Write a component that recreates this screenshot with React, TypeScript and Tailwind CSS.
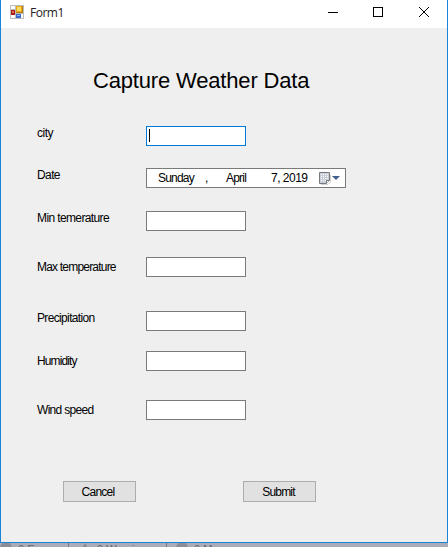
import { useState } from "react";

interface IField {
  name: string;
  label: string;
  rowClass: string;
  labelClass: string;
}

const fields: IField[] = [
  { name: "min", label: "Min temerature", rowClass: "mt-[23px]", labelClass: "tracking-[-0.62px]" },
  { name: "max", label: "Max temperature", rowClass: "mt-[26px]", labelClass: "pt-[3px] tracking-[-0.8px]" },
  { name: "precipitation", label: "Precipitation", rowClass: "mt-[34px]", labelClass: "tracking-[-0.65px]" },
  { name: "humidity", label: "Humidity", rowClass: "mt-5", labelClass: "pt-[3px] tracking-[-0.9px]" },
  { name: "wind", label: "Wind speed", rowClass: "mt-[29px]", labelClass: "pt-[3px] tracking-[-0.7px]" },
];

function FormIcon() {
  return (
    <svg width="14" height="14" viewBox="0 0 14 14" shapeRendering="crispEdges">
      <rect width="14" height="14" fill="#bdbdbd" />
      <rect x="1" y="1" width="4" height="3" fill="#fff" />
      <rect x="1" y="10" width="4" height="3" fill="#fff" />
      <rect x="11" y="9" width="2" height="4" fill="#fff" />
      <rect x="1" y="5" width="4" height="5" fill="#a81e16" />
      <rect x="2" y="6" width="2" height="2" fill="#df6a5c" />
      <rect x="6" y="1" width="7" height="7" fill="#b27d0c" />
      <rect x="6" y="1" width="6" height="6" fill="#e5aa16" />
      <rect x="7" y="2" width="4" height="4" fill="#ffdc60" />
      <rect x="6" y="9" width="5" height="4" fill="#3868cc" />
      <rect x="7" y="10" width="3" height="1" fill="#8fb7f5" />
    </svg>
  );
}

function CalendarIcon() {
  return (
    <svg width="21" height="14" viewBox="0 0 21 14">
      <path d="M2 12.5h7l2.5-2.5V3" fill="none" stroke="#d5d0cc" />
      <path d="M.5.5h10v8l-3 3h-7z" fill="#c9d0da" stroke="#77797d" />
      <path
        d="M2 2.5h8M2 4.5h8M2 6.5h8M2 8.5h5"
        stroke="#f6f8fa"
        strokeDasharray="1 1"
        shapeRendering="crispEdges"
      />
      <path d="M7.5 11.5v-3h3" fill="#fff" stroke="#77797d" />
      <path d="M13 4h8l-4 4z" fill="#425e8c" />
    </svg>
  );
}

function TitleBar() {
  return (
    <div className="flex h-7 shrink-0 bg-white pl-[9px]">
      <div className="pt-[5px]">
        <FormIcon />
      </div>
      <span className="ml-[6px] pt-[5px] text-[12px] leading-4 tracking-[-0.5px] text-[#222] font-['Open_Sans',sans-serif]">
        Form1
      </span>
      <svg className="ml-auto mr-[18px] mt-[7px]" width="101" height="10" viewBox="0 0 101 10">
        <path d="M0 5.5h10" stroke="#000" />
        <rect x="45.5" y=".5" width="9" height="9" fill="none" stroke="#000" />
        <path d="M91 0l10 10M101 0L91 10" stroke="#000" />
      </svg>
    </div>
  );
}

export default function App() {
  const [values, setValues] = useState<Record<string, string>>({});

  const setValue = (name: string, value: string) => setValues({ ...values, [name]: value });

  return (
    <div className="h-[547px] w-[448px] overflow-hidden bg-[#a9adb9] text-[12px] leading-[14px] text-black font-['Liberation_Sans',Arial,sans-serif]">
      <div className="flex h-[543px] flex-col border-x border-b border-[#1883d7] bg-[#efefef]">
        <TitleBar />
        <h1 className="ml-[92px] mt-[40px] whitespace-nowrap text-[22px] leading-[26px] tracking-[-0.17px]">
          Capture Weather Data
        </h1>
        <form className="ml-9 text-[12px]" onSubmit={(e) => e.preventDefault()}>
          <div className="mt-[32px] flex h-5">
            <label className="w-[109px] tracking-[-0.5px]">city</label>
            <div className="flex w-[100px] border border-[#0078d7] bg-white pl-[2px] pt-[2px]">
              <div className="h-[13px] w-px bg-black" />
            </div>
          </div>
          <div className="mt-[22px] flex h-5">
            <label className="w-[109px] tracking-[-0.6px]">Date</label>
            <div className="flex w-[200px] border border-[#7a7a7a] bg-white pl-[11px] pt-[2px] tracking-[-0.8px]">
              <span className="w-[47px]">Sunday</span>
              <span className="w-[21px]">,</span>
              <span className="w-[45px]">April</span>
              <span className="w-12 whitespace-nowrap tracking-[-0.5px]">7, 2019</span>
              <div className="pt-px">
                <CalendarIcon />
              </div>
            </div>
          </div>
          {fields.map((field) => (
            <div key={field.name} className={`flex h-5 ${field.rowClass}`}>
              <label htmlFor={field.name} className={`w-[109px] whitespace-nowrap ${field.labelClass}`}>
                {field.label}
              </label>
              <input
                id={field.name}
                className="h-5 w-[100px] border border-[#7a7a7a] bg-white px-1 outline-none"
                value={values[field.name] ?? ""}
                onChange={(e) => setValue(field.name, e.target.value)}
              />
            </div>
          ))}
          <div className="ml-[26px] mt-[61px] flex gap-[107px]">
            <button className="h-[21px] w-[73px] border border-[#adadad] bg-[#e1e1e1] pr-[3px] tracking-[-0.75px]">
              Cancel
            </button>
            <button className="h-[21px] w-[73px] border border-[#adadad] bg-[#e1e1e1] pr-[2px] tracking-[-0.8px]">
              Submit
            </button>
          </div>
        </form>
      </div>
      {/* strip of the error list behind the window */}
      <div className="flex h-1 overflow-hidden bg-[#a9adb9] text-[11px] leading-[12px] text-[#63666f]">
        <div className="flex w-[69px] border-r border-[#777b86]">
          <span className="-mt-px h-3 w-3 rounded-full bg-[#8b8e97]" />
          <span className="ml-[6px] whitespace-nowrap">0 Errors</span>
        </div>
        <div className="flex w-[98px] border-r border-[#777b86] pl-3">
          <svg width="8" height="8" viewBox="0 0 8 8">
            <path d="M4 0l4 8H0z" fill="#858891" />
          </svg>
          <span className="ml-2 whitespace-nowrap">0 Warnings</span>
        </div>
        <div className="flex pl-[9px]">
          <span className="-mt-px h-3 w-3 rounded-full bg-[#8b8e97]" />
          <span className="ml-[6px] whitespace-nowrap">0 M</span>
        </div>
      </div>
    </div>
  );
}
